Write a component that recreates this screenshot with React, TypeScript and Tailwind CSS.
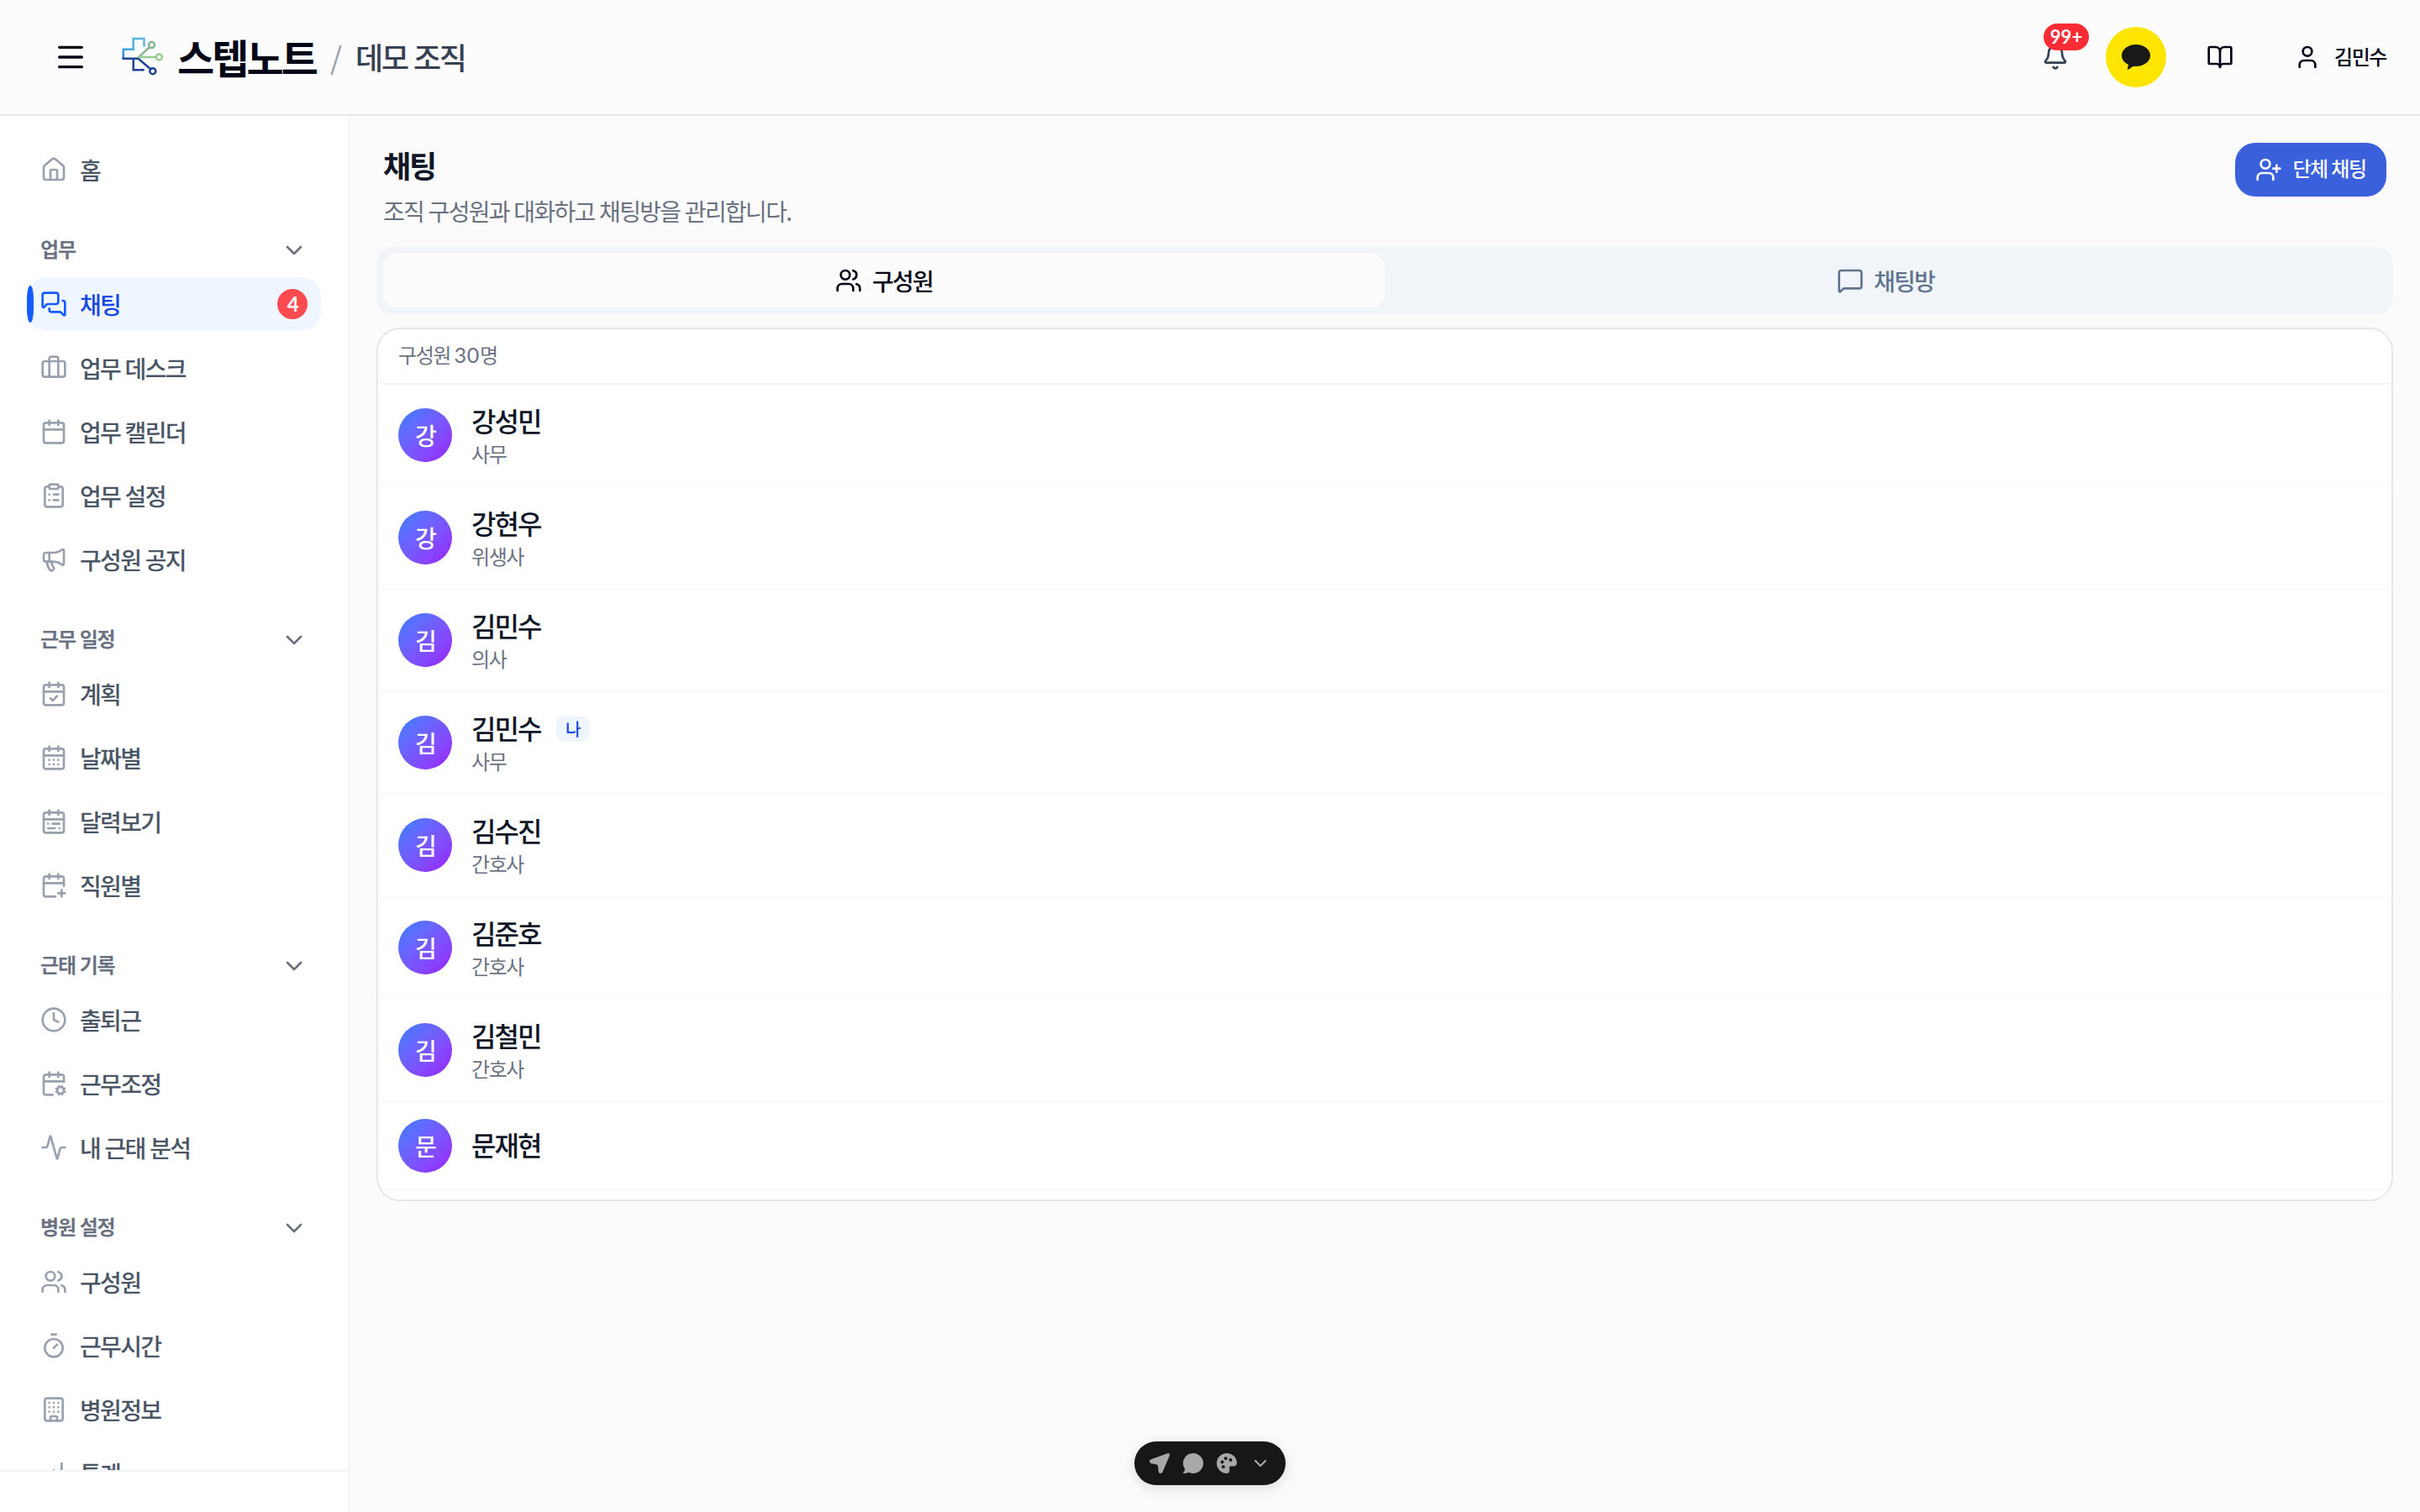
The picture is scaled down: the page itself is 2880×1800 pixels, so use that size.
import React from "react";
import {
  Activity,
  Bell,
  BookOpen,
  Calendar,
  CalendarCheck,
  CalendarCog,
  CalendarDays,
  CalendarPlus,
  CalendarRange,
  ChartNoAxesColumnIncreasing,
  ChevronDown,
  ClipboardList,
  Clock,
  House,
  Megaphone,
  Menu,
  MessageSquare,
  MessagesSquare,
  Timer,
  User,
  UserPlus,
  Users,
  type LucideIcon,
} from "lucide-react";

type NavItem = {
  label: string;
  icon: LucideIcon | React.FC<{ className?: string }>;
  active?: boolean;
  badge?: number;
};

type NavSection = { title: string; items: NavItem[] };

const DeskIcon: React.FC<{ className?: string }> = ({ className }) => (
  <svg
    viewBox="0 0 24 24"
    fill="none"
    stroke="currentColor"
    strokeWidth={2}
    strokeLinecap="round"
    strokeLinejoin="round"
    className={className}
  >
    <path d="M16 20V4a2 2 0 0 0-2-2h-4a2 2 0 0 0-2 2v16" />
    <rect width="20" height="14" x="2" y="6" rx="2" />
  </svg>
);

const HospitalIcon: React.FC<{ className?: string }> = ({ className }) => (
  <svg
    viewBox="0 0 24 24"
    fill="none"
    stroke="currentColor"
    strokeWidth={2}
    strokeLinecap="round"
    strokeLinejoin="round"
    className={className}
  >
    <rect width="16" height="20" x="4" y="2" rx="2" />
    <path d="M9 22v-3a1 1 0 0 1 1-1h4a1 1 0 0 1 1 1v3" />
    <path d="M8 6h.01M12 6h.01M16 6h.01M8 10h.01M12 10h.01M16 10h.01M8 14h.01M12 14h.01M16 14h.01" />
  </svg>
);

const sections: NavSection[] = [
  {
    title: "업무",
    items: [
      { label: "채팅", icon: MessagesSquare, active: true, badge: 4 },
      { label: "업무 데스크", icon: DeskIcon },
      { label: "업무 캘린더", icon: Calendar },
      { label: "업무 설정", icon: ClipboardList },
      { label: "구성원 공지", icon: Megaphone },
    ],
  },
  {
    title: "근무 일정",
    items: [
      { label: "계획", icon: CalendarCheck },
      { label: "날짜별", icon: CalendarDays },
      { label: "달력보기", icon: CalendarRange },
      { label: "직원별", icon: CalendarPlus },
    ],
  },
  {
    title: "근태 기록",
    items: [
      { label: "출퇴근", icon: Clock },
      { label: "근무조정", icon: CalendarCog },
      { label: "내 근태 분석", icon: Activity },
    ],
  },
  {
    title: "병원 설정",
    items: [
      { label: "구성원", icon: Users },
      { label: "근무시간", icon: Timer },
      { label: "병원정보", icon: HospitalIcon },
      { label: "통계", icon: ChartNoAxesColumnIncreasing },
    ],
  },
];

const members = [
  { name: "강성민", role: "사무" },
  { name: "강현우", role: "위생사" },
  { name: "김민수", role: "의사" },
  { name: "김민수", role: "사무", me: true },
  { name: "김수진", role: "간호사" },
  { name: "김준호", role: "간호사" },
  { name: "김철민", role: "간호사" },
  { name: "문재현" },
];

const Logo = () => (
  <svg viewBox="0 0 56 56" className="size-14" fill="none" strokeWidth="2.5">
    <defs>
      <linearGradient
        id="logo-top"
        gradientUnits="userSpaceOnUse"
        x1="6"
        y1="30"
        x2="32"
        y2="6"
      >
        <stop offset="0" stopColor="#2b86dc" />
        <stop offset="0.4" stopColor="#45a9e6" />
        <stop offset="1" stopColor="#62b6dc" />
      </linearGradient>
    </defs>
    <path d="M31.500 15.500V6H18.700v12.700H6.800V30" stroke="url(#logo-top)" />
    <path d="M5.600 29.800h19l14 12M18.700 30v13.200h13" stroke="#1d4293" />
    <path d="M24.500 28.500L38 16" stroke="#86b894" />
    <path d="M25.500 28h20" stroke="#93cb92" />
    <circle cx="40.500" cy="13.600" r="3.500" stroke="#86b894" />
    <circle cx="49.300" cy="28" r="3.500" stroke="#93cb92" />
    <circle cx="41.800" cy="44.700" r="3.500" stroke="#1d4293" />
  </svg>
);

const Header = () => (
  <header className="flex h-[138px] shrink-0 items-center justify-between border-b-2 border-slate-200 bg-[#fcfcfc] pl-16 pr-10">
    <div className="flex items-center">
      <Menu className="size-10 text-[#020617]" />
      <div className="ml-9 flex items-center">
        <Logo />
        <span className="ml-[15px] w-[168px] pb-0.5 text-[48px] leading-none font-bold text-[#020617]">
          스텝노트
        </span>
        <span className="ml-[14px] pb-0.5 text-[36px] leading-none text-gray-400">
          /
        </span>
        <span className="ml-[18px] pb-0.5 text-[36px] leading-none font-medium text-gray-700">
          데모 조직
        </span>
      </div>
    </div>
    <div className="flex items-center">
      <div className="relative mr-11">
        <Bell className="size-8 text-gray-700" />
        <span className="absolute -top-6 left-0.5 flex h-8 w-[54px] items-center justify-center rounded-full bg-[#fb2c36] font-[Lato] text-[22px] leading-none font-bold tracking-normal! text-white">
          99+
        </span>
      </div>
      <div className="flex size-[72px] items-center justify-center rounded-full bg-[#fee500]">
        <svg viewBox="0 0 34 30" className="h-[30px] w-[34px]">
          <path
            d="M17 0C7.600 0 0 5.800 0 13c0 4.700 3.200 8.700 8 11l-1.200 5c-.1.700.5 1 1 .7l6.200-4c1 .2 2 .3 3 .3 9.400 0 17-5.800 17-13S26.400 0 17 0z"
            fill="#191919"
          />
        </svg>
      </div>
      <BookOpen className="ml-12 size-8 text-[#020617]" />
      <User className="ml-[72px] size-8 text-[#020617]" />
      <span className="ml-4 w-[62px] pb-[3px] text-2xl leading-none font-medium whitespace-nowrap text-[#020617]">
        김민수
      </span>
    </div>
  </header>
);

const NavLink: React.FC<{ item: NavItem }> = ({ item }) => {
  const Icon = item.icon;
  return (
    <a
      className={`relative flex h-16 items-center rounded-3xl px-4 ${
        item.active ? "bg-blue-50" : ""
      }`}
    >
      {item.active && (
        <span className="absolute top-2.5 left-0 h-11 w-2 rounded-[50%/35%] bg-blue-600" />
      )}
      <Icon
        className={`size-8 ${item.active ? "text-blue-600" : "text-gray-400"}`}
      />
      <span
        className={`ml-[15px] flex-1 text-[28px] leading-none font-medium ${
          item.active ? "text-blue-700" : "text-gray-600"
        }`}
      >
        {item.label}
      </span>
      {item.badge && (
        <span className="flex size-9 items-center justify-center rounded-full bg-[#fb4b4f] font-[Lato] text-2xl leading-none font-bold text-white">
          {item.badge}
        </span>
      )}
    </a>
  );
};

const Sidebar = () => (
  <aside className="flex w-[416px] shrink-0 flex-col border-r-2 border-gray-100 bg-white">
    <nav className="min-h-0 flex-1 overflow-hidden px-8 pt-8">
      <NavLink item={{ label: "홈", icon: House }} />
      {sections.map((section) => (
        <div key={section.title}>
          <div className="mt-8 flex h-16 items-center justify-between px-4">
            <span className="pb-1 text-2xl leading-none font-bold tracking-[-0.05em]! text-gray-500">
              {section.title}
            </span>
            <ChevronDown className="size-8 text-gray-500" />
          </div>
          <div className="flex flex-col gap-3">
            {section.items.map((item) => (
              <NavLink key={item.label} item={item} />
            ))}
          </div>
        </div>
      ))}
    </nav>
    <div className="h-[50px] shrink-0 border-t-2 border-gray-100" />
  </aside>
);

const Toolbar = () => (
  <div className="absolute bottom-8 left-[1350px] flex h-[52px] w-[180px] items-center justify-between rounded-full bg-[#171717] px-[18px] text-[#a8a8a8] shadow-[0_4px_16px_rgba(0,0,0,0.12)]">
    <svg viewBox="0 0 24 24" className="size-6" fill="currentColor">
      <path d="M21.300.200 2 7.200C-.6 8.200-.6 11.700 2.200 12.200l6.300 1.200c.8.200 1.400.8 1.500 1.600l.8 7c.3 2.600 3.900 2.700 4.900.3L23.800 3C24.500 1.200 23.100-.4 21.300.2z" />
    </svg>
    <svg viewBox="0 0 24 24" className="size-6" fill="currentColor">
      <path d="M12 0a12 12 0 1 1-5.200 22.800C5.200 23.700 2.800 24 .8 24c-.8 0-1-.8-.5-1.300 1-1 1.800-2.400 1.900-3.800A12 12 0 0 1 12 0z" />
    </svg>
    <svg viewBox="0 0 24 24" className="size-6">
      <path
        fill="currentColor"
        d="M12 0c6.600 0 12 5 12 11.300 0 3-1.500 4.200-4 4.200h-3c-1.600 0-2.500 1-2 2.600.5 1.800.8 5.900-3 5.900A12 12 0 0 1 12 0z"
      />
      <g fill="#171717">
        <circle cx="10.700" cy="6.200" r="1.900" />
        <circle cx="16.500" cy="8" r="1.900" />
        <circle cx="6.500" cy="10.500" r="1.900" />
        <circle cx="7.800" cy="16.200" r="1.900" />
      </g>
    </svg>
    <ChevronDown className="size-6" strokeWidth={2.2} />
  </div>
);

export default function App() {
  return (
    <div className="relative flex h-[1800px] w-[2880px] flex-col overflow-hidden bg-[#fbfbfb] font-['Noto_Sans_CJK_KR',sans-serif] **:tracking-[-0.06em] **:[word-spacing:0.03em]">
      <Header />
      <div className="flex min-h-0 flex-1">
        <Sidebar />
        <main className="flex-1 px-8 pt-8">
          <div className="flex h-[124px] items-start justify-between px-2">
            <div>
              <h1 className="mt-0.5 text-[36px] leading-[48px] font-bold text-gray-900">
                채팅
              </h1>
              <p className="mt-[11px] text-[28px] leading-10 text-gray-500">
                조직 구성원과 대화하고 채팅방을 관리합니다.
              </p>
            </div>
            <button className="flex h-16 w-[180px] items-center justify-center gap-3 rounded-[24px] bg-[#3b60dc] text-2xl font-medium text-slate-50">
              <UserPlus className="size-8" />
              <span className="pb-1">단체 채팅</span>
            </button>
          </div>

          <div className="grid h-20 grid-cols-2 rounded-[20px] bg-slate-100 p-2 text-[28px] font-medium">
            <button className="flex items-center justify-center gap-3 rounded-2xl bg-[#fcfcfc] text-[#020617]">
              <Users className="size-8" />
              구성원
            </button>
            <button className="flex items-center justify-center gap-3 text-slate-500">
              <MessageSquare className="size-8" />
              채팅방
            </button>
          </div>

          <section className="mt-4 h-[1040px] overflow-hidden rounded-[28px] border-2 border-gray-200 bg-white">
            <div className="flex h-[66px] items-center border-b-2 border-gray-100 px-6 pb-[3px] text-2xl text-gray-500">
              <span>
                구성원{" "}
                <span className="font-[Lato] text-[25px] tracking-[0.03em]!">
                  30
                </span>
                명
              </span>
            </div>
            <ul>
              {members.map((member, i) => (
                <li
                  key={i}
                  className="flex items-center gap-[23px] border-b-2 border-gray-50 px-6 py-5"
                >
                  <div className="flex size-16 items-center justify-center rounded-full bg-gradient-to-br from-blue-500 to-purple-600 text-[28px] leading-none font-medium text-white">
                    {member.name[0]}
                  </div>
                  <div className="-mt-0.5 mb-0.5">
                    <div className="flex h-12 items-center gap-[18px]">
                      <span className="text-[32px] leading-none font-medium text-gray-900">
                        {member.name}
                      </span>
                      {member.me && (
                        <span className="mt-1 flex h-[30px] w-10 items-center justify-center rounded-lg bg-blue-50 text-xl leading-none font-medium text-blue-700">
                          나
                        </span>
                      )}
                    </div>
                    {member.role && (
                      <p className="text-2xl leading-8 text-gray-500">
                        {member.role}
                      </p>
                    )}
                  </div>
                </li>
              ))}
            </ul>
          </section>
        </main>
      </div>
      <Toolbar />
    </div>
  );
}
